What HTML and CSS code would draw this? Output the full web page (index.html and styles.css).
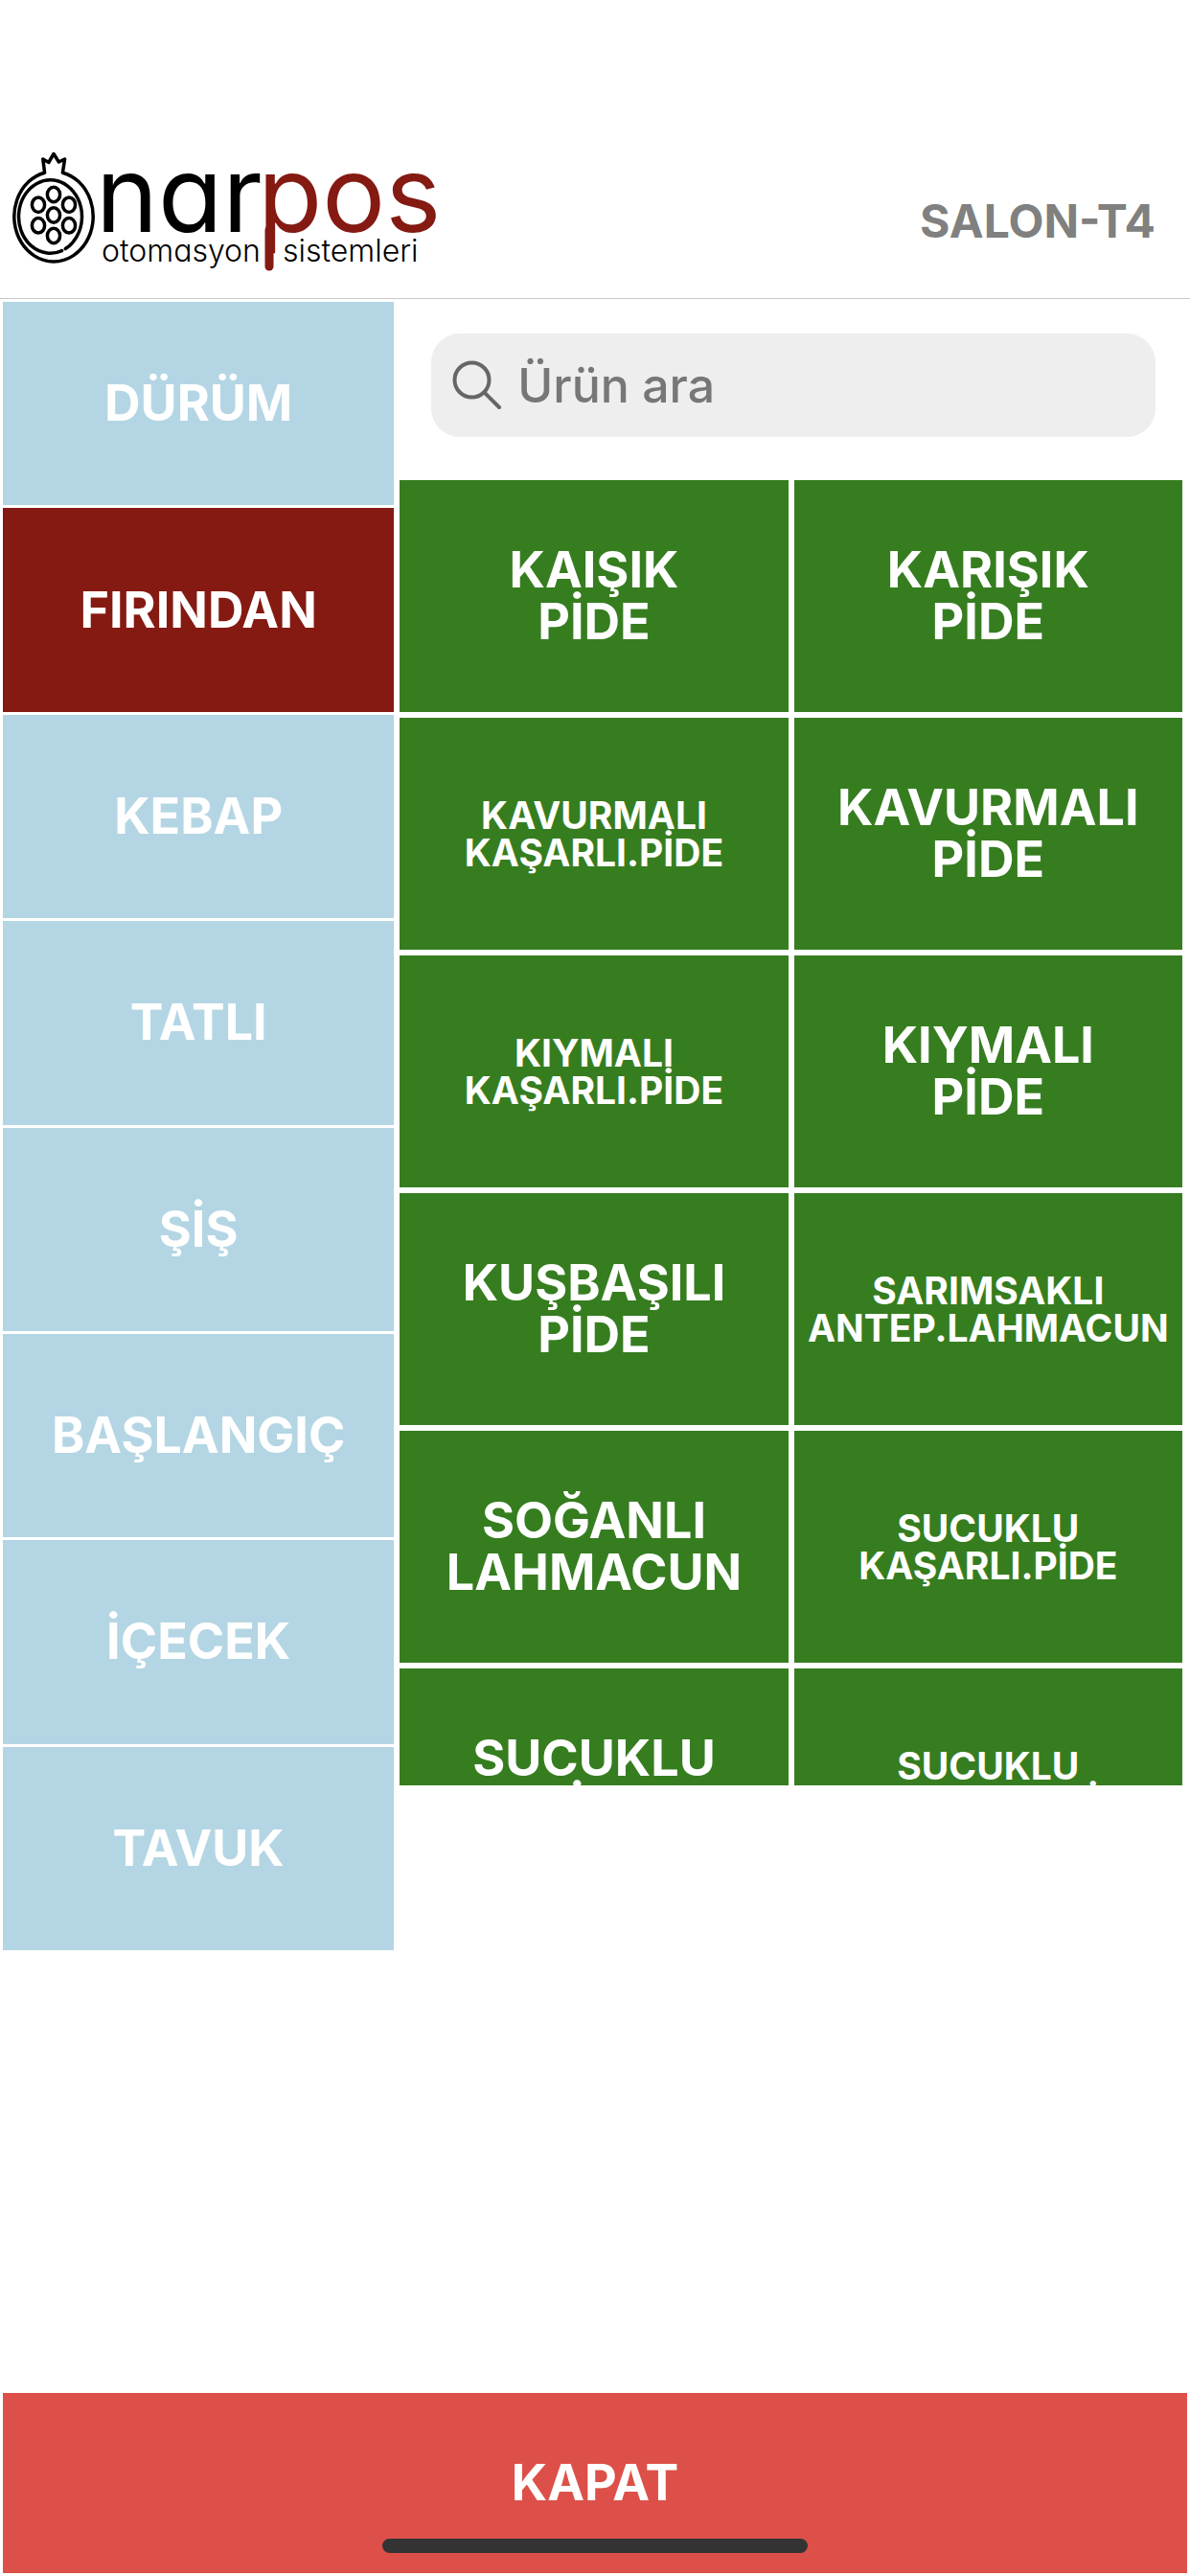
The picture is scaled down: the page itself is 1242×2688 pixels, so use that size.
FILE: index.html
```html
<!DOCTYPE html>
<html lang="tr">
<head>
<meta charset="utf-8">
<meta name="viewport" content="width=device-width, initial-scale=1">
<title>narpos – SALON-T4</title>
<link rel="stylesheet" href="styles.css">
</head>
<body>
<header class="header">
  <svg class="logo" viewBox="0 150 470 161" role="img" aria-label="narpos otomasyon sistemleri">
    <g class="fruit">
      <path d="M65.4 180.2A41.2 47 0 1 1 46.6 180.2L44.8 166L50.8 169.5L56 160.5L61.4 169L67.6 166Z"/>
      <path d="M68.3 259.6A33 38.2 0 1 0 64.6 261.6"/>
      <ellipse cx="56" cy="203" rx="6.600" ry="7.700"/>
      <ellipse cx="40" cy="213.700" rx="6.600" ry="7.700"/>
      <ellipse cx="72" cy="213.700" rx="6.600" ry="7.700"/>
      <ellipse cx="56" cy="224.500" rx="6.600" ry="7.700"/>
      <ellipse cx="40" cy="235.300" rx="6.600" ry="7.700"/>
      <ellipse cx="72" cy="235.300" rx="6.600" ry="7.700"/>
      <ellipse cx="56" cy="246" rx="6.600" ry="7.700"/>
    </g>
    <text class="word" x="100" y="242">nar</text>
    <text class="word word-red" x="269" y="242">pos</text>
    <line class="stem" x1="281" y1="240" x2="281" y2="278"/>
    <text class="tagline" x="106" y="273">otomasyon</text>
    <text class="tagline" x="295" y="273">sistemleri</text>
  </svg>
  <h1 class="table-name">SALON-T4</h1>
</header>

<main class="main">
  <nav class="categories" aria-label="Kategoriler">
    <button class="category" type="button">DÜRÜM</button>
    <button class="category active" type="button" aria-current="true">FIRINDAN</button>
    <button class="category" type="button">KEBAP</button>
    <button class="category" type="button">TATLI</button>
    <button class="category" type="button">ŞİŞ</button>
    <button class="category" type="button">BAŞLANGIÇ</button>
    <button class="category" type="button">İÇECEK</button>
    <button class="category" type="button">TAVUK</button>
  </nav>

  <section class="content">
    <label class="search">
      <svg class="search-icon" viewBox="0 0 52 52" aria-hidden="true">
        <circle cx="20.500" cy="20.500" r="18"/>
        <path d="M33.500 33.500L49 49"/>
      </svg>
      <input class="search-input" type="search" placeholder="Ürün ara" aria-label="Ürün ara">
    </label>
    <div class="products">
      <button class="product" type="button">KAIŞIK<br>PİDE</button>
      <button class="product" type="button">KARIŞIK<br>PİDE</button>
      <button class="product small" type="button">KAVURMALI<br>KAŞARLI.PİDE</button>
      <button class="product" type="button">KAVURMALI<br>PİDE</button>
      <button class="product small" type="button">KIYMALI<br>KAŞARLI.PİDE</button>
      <button class="product" type="button">KIYMALI<br>PİDE</button>
      <button class="product" type="button">KUŞBAŞILI<br>PİDE</button>
      <button class="product small" type="button">SARIMSAKLI<br>ANTEP.LAHMACUN</button>
      <button class="product" type="button">SOĞANLI<br>LAHMACUN</button>
      <button class="product small" type="button">SUCUKLU<br>KAŞARLI.PİDE</button>
      <button class="product" type="button">SUCUKLU<br>PİDE</button>
      <button class="product small" type="button">SUCUKLU<br>YUMURTALI.PİDE</button>
    </div>
  </section>
</main>

<footer class="footer">
  <button class="close" type="button">KAPAT</button>
  <span class="home-indicator"></span>
</footer>
</body>
</html>
```
FILE: styles.css
```css
* {
  box-sizing: border-box;
}

body {
  margin: 0;
  min-height: 100vh;
  display: flex;
  flex-direction: column;
  background: #fff;
  font-family: Inter, "Liberation Sans", sans-serif;
}

button {
  border: 0;
  padding: 0;
  border-radius: 0;
  color: #fff;
  font: 650 52px/54px Inter, "Liberation Sans", sans-serif;
}

/* Header */
.header {
  display: flex;
  align-items: center;
  justify-content: space-between;
  padding: 150px 36px 0 0;
  border-bottom: 1px solid #c8c8c8;
}

.logo {
  width: 470px;
  height: 161px;
}

.fruit {
  fill: none;
  stroke: #000;
  stroke-width: 3.5;
  stroke-linejoin: round;
  stroke-linecap: round;
}

.word {
  font-size: 110px;
  font-weight: 400;
  font-feature-settings: "cv11";
}

.word-red {
  fill: #841a12;
}

.stem {
  stroke: #841a12;
  stroke-width: 9;
  stroke-linecap: round;
}

.tagline {
  font-size: 32px;
  font-weight: 300;
  font-feature-settings: "cv11";
}

.table-name {
  margin: 0;
  color: #808080;
  font-size: 48px;
  font-weight: 650;
  line-height: 56px;
}

/* Category column and product grid */
.main {
  display: grid;
  grid-template-columns: 1fr 2fr;
  align-items: start;
  gap: 6px;
  padding: 3px 8px 3px 3px;
}

.categories {
  display: grid;
  grid-auto-rows: 1fr;
  gap: 3px;
  min-height: 1720px;
}

.category {
  background: #b4d6e4;
}

.category.active {
  background: #841a12;
}

.content {
  min-width: 0;
}

.search {
  display: flex;
  align-items: center;
  gap: 16px;
  height: 108px;
  margin: 33px 28px 45px 33px;
  padding: 0 22px;
  border-radius: 30px;
  background: #eee;
}

.search-icon {
  flex: none;
  width: 52px;
  height: 52px;
  fill: none;
  stroke: #666;
  stroke-width: 4;
  stroke-linecap: round;
}

.search-input {
  flex: 1;
  min-width: 0;
  padding: 0;
  border: 0;
  outline: 0;
  background: none;
  color: #333;
  font: 500 50px/60px Inter, "Liberation Sans", sans-serif;
  appearance: none;
}

.search-input::placeholder {
  color: #777;
  opacity: 1;
}

.products {
  display: grid;
  grid-template-columns: 1fr 1fr;
  grid-auto-rows: 242px;
  gap: 6px;
  max-height: 1362px;
  overflow: hidden;
}

.product {
  background: #367d20;
}

.product.small {
  font-size: 39px;
  line-height: 39px;
}

/* Bottom bar */
.footer {
  position: relative;
  margin-top: auto;
  padding: 3px;
}

.close {
  display: block;
  width: 100%;
  height: 188px;
  background: #dd5049;
}

.home-indicator {
  position: absolute;
  left: 50%;
  bottom: 24px;
  width: 444px;
  height: 15px;
  margin-left: -222px;
  border-radius: 8px;
  background: #333;
}
```
